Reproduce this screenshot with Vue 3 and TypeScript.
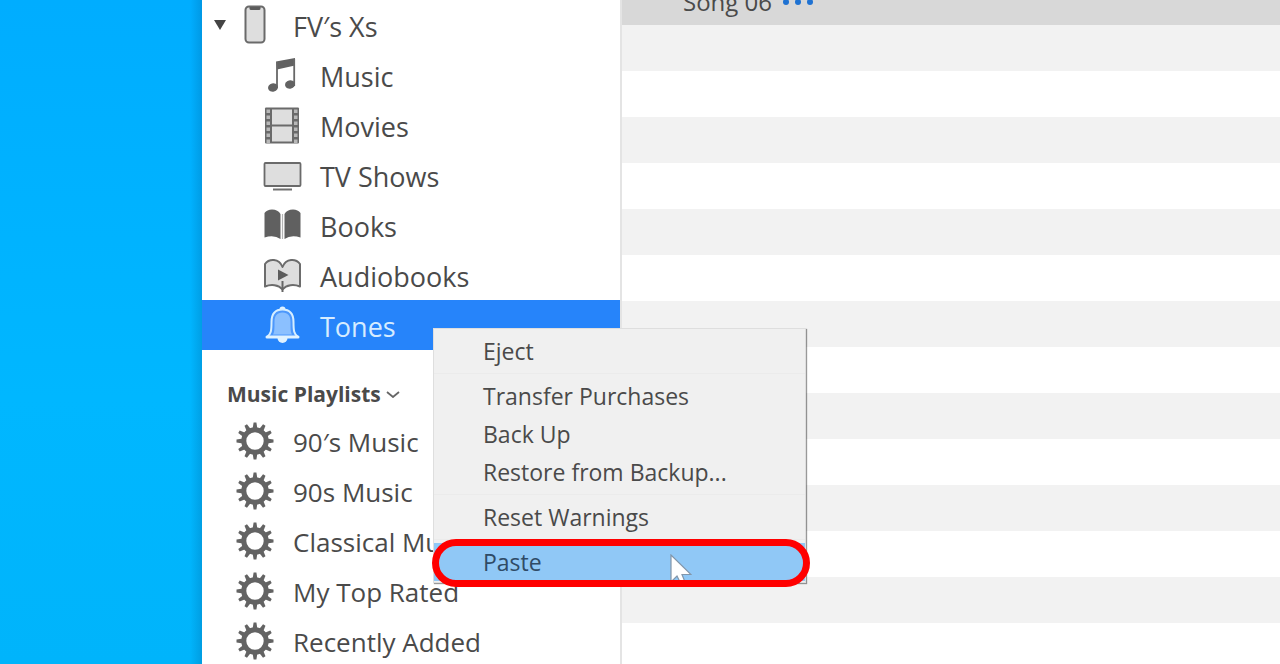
<script setup lang="ts">
type IconName = 'music' | 'movies' | 'tv' | 'books' | 'audiobooks' | 'tones'

interface LibraryItem {
  label: string
  icon: IconName
}

const library: LibraryItem[] = [
  { label: 'Music', icon: 'music' },
  { label: 'Movies', icon: 'movies' },
  { label: 'TV Shows', icon: 'tv' },
  { label: 'Books', icon: 'books' },
  { label: 'Audiobooks', icon: 'audiobooks' },
  { label: 'Tones', icon: 'tones' },
]

const playlists: string[] = ['90′s Music', '90s Music', 'Classical Music', 'My Top Rated', 'Recently Added']

const menuGroups: string[][] = [
  ['Eject'],
  ['Transfer Purchases', 'Back Up', 'Restore from Backup...'],
  ['Reset Warnings'],
  ['Paste'],
]

const filmHoles: number[] = [3, 9, 15, 21, 27, 33]
const gearTeeth: number[] = Array.from({ length: 12 }, (_, i) => i * 30)
</script>

<template>
  <div class="screen">
    <div class="desktop"></div>

    <aside class="sidebar">
      <nav class="library" aria-label="Device">
        <button class="row device" type="button" aria-expanded="true">
          <svg class="twisty" viewBox="0 0 12 10" aria-hidden="true"><path d="M0 0h12L6 10z" fill="#444" /></svg>
          <svg class="icon" viewBox="0 0 40 40" aria-hidden="true">
            <rect x="10.500" y="1.500" width="19" height="36" rx="3.500" fill="#dedede" stroke="#6a6a6a" stroke-width="2" />
            <path d="M14.500 2h11v1.500q0 1.500-1.500 1.500h-8q-1.500 0-1.500-1.500z" fill="#5c5c5c" />
          </svg>
          <span>FV′s Xs</span>
        </button>

        <button
          v-for="item in library"
          :key="item.label"
          class="row child"
          :class="{ selected: item.icon === 'tones' }"
          type="button"
        >
          <svg v-if="item.icon === 'music'" class="icon" viewBox="0 0 40 40" aria-hidden="true">
            <path d="M14 6.500 33 3V10.500L15 14.500z" fill="#626262" />
            <path d="M15 7v26M32.200 4v27" stroke="#686868" stroke-width="1.800" fill="none" />
            <ellipse cx="11" cy="32.500" rx="5" ry="4.200" transform="rotate(-15 11 32.500)" fill="#626262" />
            <ellipse cx="28" cy="29.500" rx="5" ry="4.200" transform="rotate(-15 28 29.500)" fill="#626262" />
          </svg>
          <svg v-else-if="item.icon === 'movies'" class="icon" viewBox="0 0 40 40" aria-hidden="true">
            <rect x="3" y="2.500" width="34" height="36" rx="1" fill="#6a6a6a" />
            <rect x="10" y="4.500" width="20" height="15" fill="#dedede" />
            <rect x="10" y="21.500" width="20" height="15" fill="#dedede" />
            <template v-for="y in filmHoles" :key="y">
              <rect x="4.500" :y="y + 1.500" width="3.500" height="3.500" fill="#b8b8b8" />
              <rect x="32" :y="y + 1.500" width="3.500" height="3.500" fill="#b8b8b8" />
            </template>
          </svg>
          <svg v-else-if="item.icon === 'tv'" class="icon" viewBox="0 0 40 40" aria-hidden="true">
            <rect x="2.500" y="8" width="36" height="23" rx="1" fill="#dedede" stroke="#6a6a6a" stroke-width="1.800" />
            <path d="M11 34.500h19" stroke="#707070" stroke-width="2" />
          </svg>
          <svg v-else-if="item.icon === 'books'" class="icon" viewBox="0 0 40 40" aria-hidden="true">
            <path d="M2.500 8Q5 4.500 10 4.500Q16 4.500 18.500 9V34Q12 29.500 2.500 32.500z" fill="#606060" />
            <path d="M38.500 8Q36 4.500 31 4.500Q25 4.500 22.500 9V34Q29 29.500 38.500 32.500z" fill="#606060" />
            <path d="M20.500 9V34" fill="none" stroke="#b4b4b4" stroke-width="1.200" />
          </svg>
          <svg v-else-if="item.icon === 'audiobooks'" class="icon" viewBox="0 0 40 40" aria-hidden="true">
            <path
              d="M3 31.500V9C7 3.500 17 3 20.500 12C24 3 34 3.500 38 9V31.500C32 29 24.500 29.500 20.500 34.500C16.500 29.500 9 29 3 31.500Z"
              fill="#dedede"
              stroke="#6c6c6c"
              stroke-width="2"
              stroke-linejoin="round"
            />
            <path d="M16 14.500 26.500 20l-10.500 5.500z" fill="#5c5c5c" />
            <path d="M20.500 26V37" stroke="#666" stroke-width="2" />
          </svg>
          <svg v-else class="icon" viewBox="0 0 40 40" aria-hidden="true">
            <circle cx="20.500" cy="4.500" r="3" fill="#e0f2ff" />
            <path
              d="M20.500 4.500C12 4.500 9.500 10 9.500 17C9.500 26 9 29 5 32H36C32 29 31.500 26 31.500 17C31.500 10 29 4.500 20.500 4.500Z"
              fill="#4d98fc"
              stroke="#d6eeff"
              stroke-width="2"
              stroke-linejoin="round"
            />
            <path d="M20.500 7.500C15 7.500 12.500 11 12.500 17C12.500 24 12.500 27 11 29.500H30C28.500 27 28.500 24 28.500 17C28.500 11 26 7.500 20.500 7.500Z" fill="#8bc0ff" />
            <path d="M5 32h31" stroke="#e0f2ff" stroke-width="3" stroke-linecap="round" />
            <path d="M15.500 33a5 5 0 0 0 10 0z" fill="#e0f2ff" />
          </svg>
          <span>{{ item.label }}</span>
        </button>
      </nav>

      <button class="heading" type="button" aria-expanded="true">
        <span>Music Playlists</span>
        <svg class="chevron" viewBox="0 0 14 8" aria-hidden="true">
          <path d="M1 2l6 5 6-5" fill="none" stroke="#666" stroke-width="1.800" />
        </svg>
      </button>

      <nav class="playlists" aria-label="Music Playlists">
        <button v-for="name in playlists" :key="name" class="row playlist" type="button">
          <svg class="icon" viewBox="0 0 40 40" aria-hidden="true">
            <circle cx="20" cy="20" r="11.200" fill="none" stroke="#636363" stroke-width="5" />
            <path
              v-for="angle in gearTeeth"
              :key="angle"
              d="M17.600 8L18.600 1.500H21.400L22.400 8z"
              :transform="`rotate(${angle} 20 20)`"
              fill="#636363"
            />
          </svg>
          <span>{{ name }}</span>
        </button>
      </nav>
    </aside>

    <main class="songs">
      <div class="song">
        <span>Song 06</span>
        <button class="more" type="button" aria-label="More options">
          <svg viewBox="0 0 32 8" aria-hidden="true">
            <g fill="#1f72d2"><circle cx="4" cy="4" r="3" /><circle cx="16" cy="4" r="3" /><circle cx="28" cy="4" r="3" /></g>
          </svg>
        </button>
      </div>
      <div class="empty-rows"></div>
    </main>

    <div class="menu" role="menu">
      <div v-for="(group, index) in menuGroups" :key="index" class="group" role="group">
        <button
          v-for="entry in group"
          :key="entry"
          class="entry"
          :class="{ active: entry === 'Paste' }"
          type="button"
          role="menuitem"
        >
          {{ entry }}
        </button>
      </div>
      <svg class="cursor" viewBox="0 0 22 32" aria-hidden="true">
        <path d="M1 1V28L7 22L11 30L15 28L12 20.500H21Z" fill="#fff" stroke="#8296aa" stroke-width="1.200" />
      </svg>
      <div class="ring"></div>
    </div>
  </div>
</template>

<style>
body {
  margin: 0;
}
</style>

<style scoped>
.screen {
  position: relative;
  display: flex;
  height: 100vh;
  overflow: hidden;
  background: #fff;
  color: #4a4a4a;
  font-family: 'Open Sans', 'Noto Sans', sans-serif;
  font-size: 26px;
}

button {
  margin: 0;
  padding: 0;
  border: 0;
  background: none;
  color: inherit;
  font: inherit;
  text-align: left;
  white-space: nowrap;
}

.desktop {
  flex: none;
  width: 202px;
  background:
    linear-gradient(to right, transparent 190px, rgba(0, 90, 150, 0.25)),
    linear-gradient(#00adff, #00b7ff 60%, #00b4fb);
}

.sidebar {
  flex: none;
  box-sizing: border-box;
  width: 420px;
  border-right: 2px solid #e4e4e4;
  background: #fff;
}

.library {
  font-size: 27px;
}

.row {
  display: flex;
  align-items: center;
  box-sizing: border-box;
  width: 100%;
  height: 50px;
}

.row span {
  padding-top: 2px;
}

.icon {
  flex: none;
  width: 40px;
  height: 40px;
}

.device {
  gap: 18px;
  padding-left: 12px;
}

.twisty {
  width: 12px;
  height: 10px;
  margin-right: -9px;
}

.child {
  gap: 18px;
  padding-left: 60px;
}

.selected {
  background: #2684fa;
  color: #d6ecff;
}

.playlist {
  gap: 18px;
  padding-left: 33px;
}

.heading {
  display: flex;
  align-items: center;
  gap: 5px;
  height: 44px;
  margin-top: 22px;
  padding-left: 25px;
  font-size: 21px;
  font-weight: 700;
}

.chevron {
  width: 14px;
  height: 8px;
}

.songs {
  display: flex;
  flex: 1;
  flex-direction: column;
  min-width: 0;
}

.song {
  display: flex;
  flex: none;
  align-items: center;
  gap: 10px;
  height: 46px;
  margin-top: -21px;
  padding-left: 61px;
  background: #d8d8d8;
  font-size: 24px;
}

.song span {
  padding-bottom: 2px;
}

.more svg {
  display: block;
  width: 32px;
  height: 8px;
}

.empty-rows {
  flex: 1;
  background: repeating-linear-gradient(#f2f2f2 0 46px, #fff 46px 92px);
}

.menu {
  position: absolute;
  top: 328px;
  left: 433px;
  box-sizing: border-box;
  width: 373px;
  padding: 3px 0 1px;
  border: 1px solid #dedede;
  background: #f0f0f0;
  box-shadow: 1px 1px 1px rgba(0, 0, 0, 0.4);
  font-size: 23px;
}

.group + .group {
  margin-top: 3px;
  padding-top: 3px;
  border-top: 1px solid #ebebeb;
}

.entry {
  display: block;
  width: 100%;
  height: 38px;
  padding-left: 49px;
  line-height: 38px;
}

.active {
  background: #90c8f6;
  color: #2f4b66;
}

.cursor {
  position: absolute;
  right: 113px;
  bottom: -4px;
  width: 22px;
  height: 32px;
}

.ring {
  position: absolute;
  right: -5px;
  bottom: -5px;
  left: -2px;
  box-sizing: border-box;
  height: 48px;
  border: 7px solid #f00;
  border-radius: 24px;
}
</style>
